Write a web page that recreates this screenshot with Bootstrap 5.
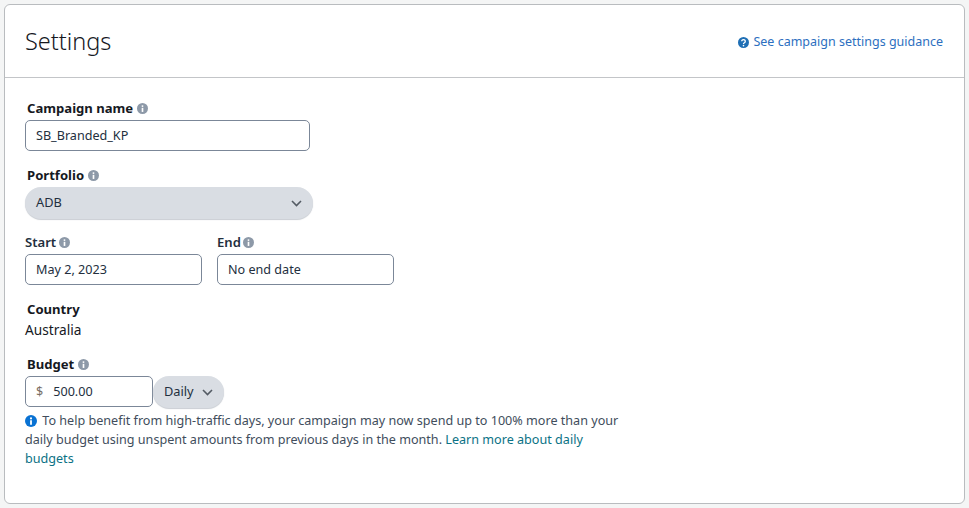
<!DOCTYPE html>
<html lang="en">
<head>
<meta charset="utf-8">
<title>Settings</title>
<link href="https://cdn.jsdelivr.net/npm/bootstrap@5.3.0/dist/css/bootstrap.min.css" rel="stylesheet">
<style>
html,body{height:100%;}
body{background:#f4f5f5;font-family:"Noto Sans","Open Sans",sans-serif;font-size:13px;color:#16191f;padding:4px;overflow:hidden;}
.set-card{height:500px;width:961px;border:1px solid #b9bcbf;border-radius:6px;background:#fff;}
.set-head{height:73px;border-bottom:1px solid #c3c5c8;padding:3px 21px 0 20px;}
.set-title{font-size:23.5px;font-weight:300;color:#16191f;margin:0 0 2px;line-height:1;}
.set-guide{color:#2d6fc0;font-size:12.5px;text-decoration:none;}
.set-body{padding:21px 20px 0 20px;}
.lbl{font-weight:700;font-size:13.1px;color:#16191f;line-height:18px;height:18px;padding-left:2px;margin-bottom:3px;}
.lbl-flush{padding-left:0;color:#232f3e;font-weight:600;}
.lbl .ico{margin-left:0;}
.lbl-flush .ico{margin-left:-1px;}
.ico{width:11px;height:11px;display:inline-block;vertical-align:-1px;}
.fld{height:31px;border:1px solid #7b8798;border-radius:5px;padding:2px 10px 0;font-size:12.6px;color:#232f3e;background:#fff;display:flex;align-items:center;}
.w-name{width:285px;}
.w-date{width:177px;}
.w-budget{width:128px;}
.pill{height:32px;background:#d9dde3;border-radius:16px;padding:0 11px;color:#232f3e;font-size:12.8px;box-shadow:0 1px 1px #c9cdd3;}
.w-port{width:288px;}
.chev{width:11px;height:7px;}
.gap-row{gap:15px;}
.note{width:600px;color:#414d5c;font-size:12.6px;line-height:19px;margin-top:3px;}
.note a{color:#0b7285;text-decoration:none;}
.note .ico{width:12px;height:12px;margin:0 2px 0 0;vertical-align:-2px;}
.dollar{color:#7a6f66;margin-right:10px;}
.aus{font-size:13.7px;color:#16191f;margin-top:3px;line-height:18px;}
.mt-a{margin-top:15px;}
.mt-b{margin-top:14px;}
.mt-c{margin-top:16px;}
</style>
</head>
<body>
<div class="set-card">
  <div class="set-head d-flex justify-content-between align-items-center">
    <h1 class="set-title">Settings</h1>
    <a class="set-guide d-flex align-items-center gap-1" href="#">
      <svg width="11" height="11" viewBox="0 0 16 16"><circle cx="8" cy="8" r="8" fill="#1f6fb5"/><path d="M5.4 6.200a2.600 2.400 0 1 1 3.900 2.100c-.9.500-1.300.9-1.300 1.900" fill="none" stroke="#fff" stroke-width="1.900"/><circle cx="8" cy="12.600" r="1.200" fill="#fff"/></svg>
      See campaign settings guidance</a>
  </div>
  <div class="set-body">
    <div class="lbl">Campaign name <svg class="ico" viewBox="0 0 16 16"><circle cx="8" cy="8" r="8" fill="#8d99a8"/><rect x="6.800" y="7" width="2.400" height="6" fill="#fff"/><circle cx="8" cy="4.500" r="1.400" fill="#fff"/></svg></div>
    <div class="fld w-name">SB_Branded_KP</div>
    <div class="lbl mt-a">Portfolio <svg class="ico" viewBox="0 0 16 16"><circle cx="8" cy="8" r="8" fill="#8d99a8"/><rect x="6.800" y="7" width="2.400" height="6" fill="#fff"/><circle cx="8" cy="4.500" r="1.400" fill="#fff"/></svg></div>
    <div class="pill w-port d-flex justify-content-between align-items-center"><span>ADB</span><svg class="chev" viewBox="0 0 11 7"><path d="M1 1l4.500 4.500L10 1" fill="none" stroke="#545b64" stroke-width="1.600"/></svg></div>
    <div class="d-flex gap-row mt-b">
      <div>
        <div class="lbl lbl-flush">Start <svg class="ico" viewBox="0 0 16 16"><circle cx="8" cy="8" r="8" fill="#8d99a8"/><rect x="6.800" y="7" width="2.400" height="6" fill="#fff"/><circle cx="8" cy="4.500" r="1.400" fill="#fff"/></svg></div>
        <div class="fld w-date">May 2, 2023</div>
      </div>
      <div>
        <div class="lbl lbl-flush">End <svg class="ico" viewBox="0 0 16 16"><circle cx="8" cy="8" r="8" fill="#8d99a8"/><rect x="6.800" y="7" width="2.400" height="6" fill="#fff"/><circle cx="8" cy="4.500" r="1.400" fill="#fff"/></svg></div>
        <div class="fld w-date">No end date</div>
      </div>
    </div>
    <div class="lbl mt-a">Country</div>
    <div class="aus">Australia</div>
    <div class="lbl mt-c">Budget <svg class="ico" viewBox="0 0 16 16"><circle cx="8" cy="8" r="8" fill="#8d99a8"/><rect x="6.800" y="7" width="2.400" height="6" fill="#fff"/><circle cx="8" cy="4.500" r="1.400" fill="#fff"/></svg></div>
    <div class="d-flex">
      <div class="fld w-budget"><span class="dollar">$</span>500.00</div>
      <div class="pill d-flex align-items-center gap-2">Daily <svg class="chev" viewBox="0 0 11 7"><path d="M1 1l4.500 4.500L10 1" fill="none" stroke="#545b64" stroke-width="1.600"/></svg></div>
    </div>
    <div class="note"><svg class="ico" viewBox="0 0 16 16"><circle cx="8" cy="8" r="8" fill="#0972d3"/><rect x="6.800" y="7" width="2.400" height="6" fill="#fff"/><circle cx="8" cy="4.500" r="1.400" fill="#fff"/></svg> To help benefit from high-traffic days, your campaign may now spend up to 100% more than your daily budget using unspent amounts from previous days in the month. <a href="#">Learn more about daily budgets</a></div>
  </div>
</div>
<script src="https://cdn.jsdelivr.net/npm/bootstrap@5.3.0/dist/js/bootstrap.bundle.min.js"></script>
</body>
</html>
